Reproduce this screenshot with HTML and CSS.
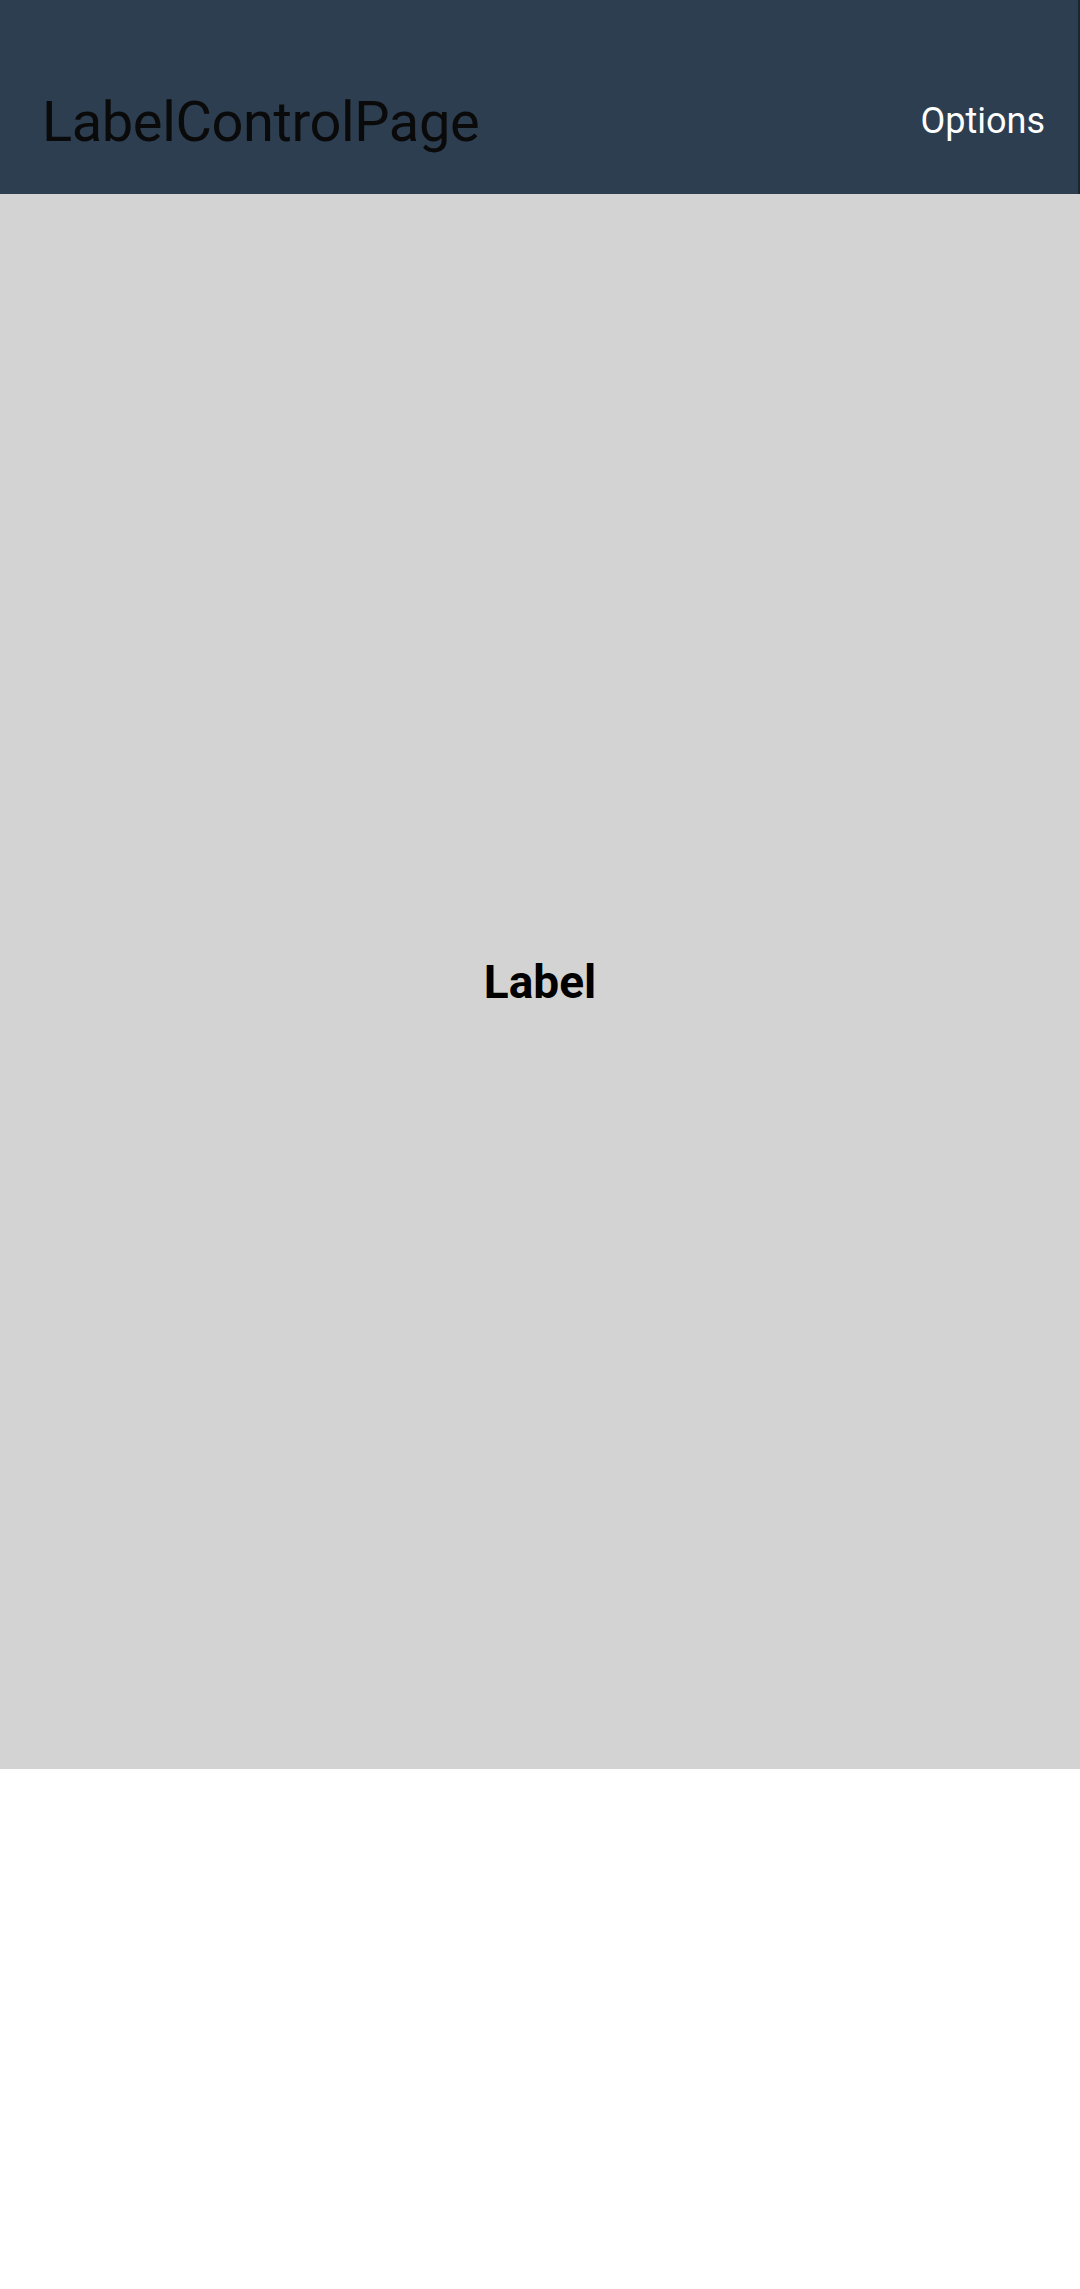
FILE: index.html
```html
<!DOCTYPE html>
<html>
<head>
<meta charset="utf-8">
<link rel="stylesheet" href="styles.css">
</head>
<body>
<header class="topbar">
  <h1 class="title">LabelControlPage</h1>
  <span class="options">Options</span>
</header>
<main class="content">
  <span class="label">Label</span>
</main>
</body>
</html>
```
FILE: styles.css
```css
html, body {
  margin: 0;
  padding: 0;
  background: #ffffff;
  font-family: Roboto, "Noto Sans", sans-serif;
}
.topbar {
  height: 194px;
  box-sizing: border-box;
  background: #2d3e50;
  border-right: 2px solid #1a2633;
  display: flex;
  justify-content: space-between;
  align-items: flex-start;
  padding: 0 33px 0 42px;
}
.title {
  margin: 0;
  margin-top: 89px;
  font-size: 56px;
  font-weight: 400;
  line-height: 66px;
  letter-spacing: -0.4px;
  color: #0a0a0a;
}
.options {
  margin-top: 100px;
  font-size: 36px;
  line-height: 42px;
  color: #ffffff;
}
.content {
  height: 1575px;
  background: #d3d3d3;
  display: flex;
  align-items: center;
  justify-content: center;
}
.label {
  font-size: 46px;
  font-weight: 700;
  color: #000000;
  line-height: 54px;
}
```
